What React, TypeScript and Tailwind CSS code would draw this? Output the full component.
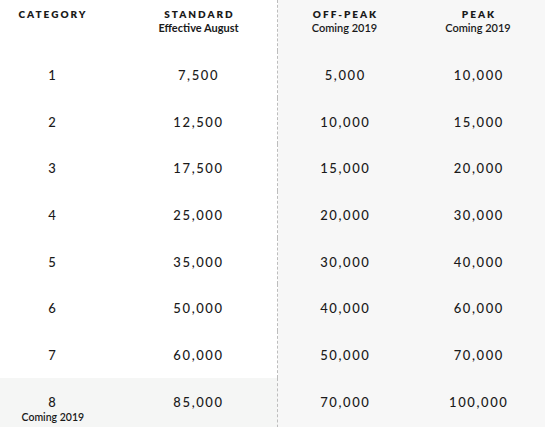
import React from "react";

const rows: [string, string, string, string][] = [
  ["1", "7,500", "5,000", "10,000"],
  ["2", "12,500", "10,000", "15,000"],
  ["3", "17,500", "15,000", "20,000"],
  ["4", "25,000", "20,000", "30,000"],
  ["5", "35,000", "30,000", "40,000"],
  ["6", "50,000", "40,000", "60,000"],
  ["7", "60,000", "50,000", "70,000"],
  ["8", "85,000", "70,000", "100,000"],
];

export default function App() {
  return (
    <div
      className="w-[560px] h-[427px] overflow-hidden bg-white text-[#1a1a1a]"
      style={{ fontFamily: "Lato, 'Open Sans', sans-serif" }}
    >
      <div className="grid grid-cols-[104px_174px_133px_134px] w-[545px]">
        {/* header */}
        <div className="h-[51px] pt-[7px] text-center text-[10px] font-extrabold tracking-[2px] pl-[2px]">CATEGORY</div>
        <div className="h-[51px] pt-[7px] pl-4 text-center border-r border-dashed border-[#bdbdbd]">
          <div className="text-[10px] font-extrabold tracking-[2px] pl-[2px] leading-[14px]">STANDARD</div>
          <div className="text-[11px] font-bold leading-[14px]">Effective August</div>
        </div>
        <div className="h-[51px] pt-[7px] text-center bg-[#f7f7f7]">
          <div className="text-[10px] font-extrabold tracking-[2px] pl-[2px] leading-[14px]">OFF-PEAK</div>
          <div className="text-[11px] font-semibold leading-[14px]">Coming 2019</div>
        </div>
        <div className="h-[51px] pt-[7px] text-center bg-[#f7f7f7]">
          <div className="text-[10px] font-extrabold tracking-[2px] pl-[2px] leading-[14px]">PEAK</div>
          <div className="text-[11px] font-semibold leading-[14px]">Coming 2019</div>
        </div>

        {rows.map((r, i) => {
          const last = i === rows.length - 1;
          const leftBg = last ? "bg-[#f5f6f5]" : "bg-white";
          const h = last ? "h-[60px]" : "h-[46.7px]";
          return (
            <React.Fragment key={r[0]}>
              <div className={`${h} ${leftBg} pt-[16px] text-center text-[13px] font-medium tracking-[1.6px] pl-[1.6px] leading-[17px]`}>
                <div>{r[0]}</div>
                {last && (
                  <div className="text-[10.5px] font-semibold tracking-normal pl-0 leading-[13px]">Coming 2019</div>
                )}
              </div>
              <div className={`${h} ${leftBg} pl-4 pt-[16px] text-center text-[13px] font-medium tracking-[1.6px] leading-[17px] border-r border-dashed border-[#bdbdbd]`}>
                {r[1]}
              </div>
              <div className={`${h} bg-[#f7f7f7] pt-[16px] text-center text-[13px] font-medium tracking-[1.6px] pl-[1.6px] leading-[17px]`}>
                {r[2]}
              </div>
              <div className={`${h} bg-[#f7f7f7] pt-[16px] text-center text-[13px] font-medium tracking-[1.6px] pl-[1.6px] leading-[17px]`}>
                {r[3]}
              </div>
            </React.Fragment>
          );
        })}
      </div>
    </div>
  );
}
